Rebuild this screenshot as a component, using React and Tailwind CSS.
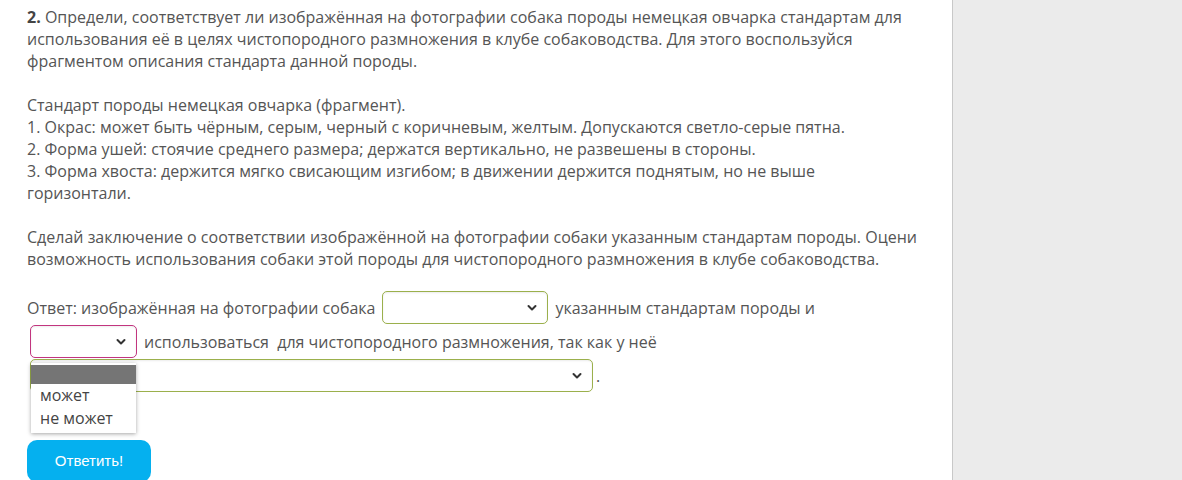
import React from "react";

const Chevron = () => (
  <svg width="10" height="7" viewBox="0 0 10 7" className="absolute right-[10px] top-1/2 -translate-y-1/2">
    <path d="M1.5 1.5 L5 5 L8.5 1.5" fill="none" stroke="#333" strokeWidth="2" strokeLinecap="round" strokeLinejoin="round" />
  </svg>
);

const Select = ({ w, border }) => (
  <div
    className={`relative mx-[3px] h-[33px] shrink-0 rounded-[5px] border bg-white shadow-[inset_0_1px_2px_rgba(0,0,0,0.08)] ${border}`}
    style={{ width: w }}
  >
    <Chevron />
  </div>
);

export default function App() {
  return (
    <div className="flex h-[480px] w-[1182px] overflow-hidden bg-white" style={{ fontFamily: '"Open Sans", "Noto Sans", sans-serif' }}>
      <div className="relative w-[952px] shrink-0 bg-white pl-[27px] pt-[6px] text-[16px] leading-[22px] text-[#555]">
        <div className="w-[892px]">
          <p>
            <b className="font-bold text-[#444]">2.</b>{" "}Определи, соответствует ли изображённая на фотографии собака породы немецкая овчарка стандартам для использования её в целях чистопородного размножения в клубе собаководства. Для этого воспользуйся фрагментом описания стандарта данной породы.
          </p>
          <p className="mt-[22px]">
            Стандарт породы немецкая овчарка (фрагмент).
            <br />
            1. Окрас: может быть чёрным, серым, черный с коричневым, желтым. Допускаются светло-серые пятна.
            <br />
            2. Форма ушей: стоячие среднего размера; держатся вертикально, не развешены в стороны.
            <br />
            3. Форма хвоста: держится мягко свисающим изгибом; в движении держится поднятым, но не выше горизонтали.
          </p>
          <p className="mt-[22px]">
            Сделай заключение о соответствии изображённой на фотографии собаки указанным стандартам породы. Оцени возможность использования собаки этой породы для чистопородного размножения в клубе собаководства.
          </p>
        </div>

        <div className="mt-[21px] flex flex-col gap-[1px]">
          <div className="flex h-[33px] items-center">
            <span>Ответ: изображённая на фотографии собака</span>
            <span className="w-[4px]" />
            <Select w={166} border="border-[#9bb04c]" />
            <span className="w-[4px]" />
            <span>указанным стандартам породы и</span>
          </div>
          <div className="flex h-[33px] items-center">
            <Select w={107} border="border-[#c2357f]" />
            <span className="w-[4px]" />
            <span className="whitespace-pre">использоваться  для чистопородного размножения, так как у неё</span>
          </div>
          <div className="flex h-[33px] items-center">
            <Select w={563} border="border-[#9bb04c]" />
            <span>.</span>
          </div>
        </div>

        <div className="absolute left-[31px] top-[363px] w-[105px] bg-white pb-[3px] pt-[2px] shadow-[0_1px_4px_rgba(0,0,0,0.35)]">
          <div className="h-[19px] bg-[#757575]" />
          <div className="px-[9px] leading-[23px] text-[#444]">может</div>
          <div className="px-[9px] leading-[23px] text-[#444]">не может</div>
        </div>

        <button
          className="mt-[48px] flex h-[42px] w-[124px] items-center justify-center rounded-[10px] bg-[#05b0ef] text-[15px] text-white"
          style={{ fontFamily: '"Liberation Sans", Arial, sans-serif' }}
        >
          Ответить!
        </button>
      </div>
      <div className="flex-1 border-l border-[#c8c8c8] bg-[#ebebeb]" />
    </div>
  );
}
